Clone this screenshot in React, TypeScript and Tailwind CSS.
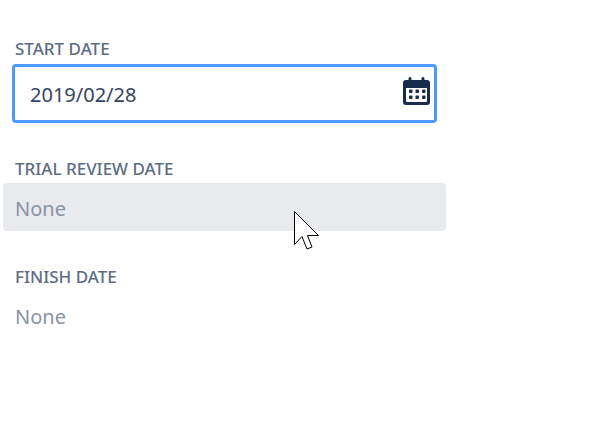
export default function App() {
  const font = { fontFamily: '"Noto Sans", "Open Sans", sans-serif' };
  return (
    <div className="relative w-[591px] h-[429px] bg-white overflow-hidden" style={font}>
      <div className="flex flex-col w-[443px] ml-[3px] pt-[38px]">
        <div className="h-[22px] pl-[12px] flex items-center text-[17px] leading-[22px] font-medium text-[#5e6c84]">START DATE</div>
        <div className="mt-[4px] ml-[9px] w-[425px] h-[59px] border-[3px] border-[#4c9aff] rounded-[4px] bg-white flex items-center justify-between pl-[15px] pr-[3px]">
          <span className="pt-[2px] text-[20px] text-[#344563]">2019/02/28</span>
          <svg className="mb-[5px]" width="28" height="28" viewBox="0 0 28 28" aria-hidden="true">
            <path fill="#172b4d" fillRule="evenodd" d="M7 0a1.500 1.500 0 0 1 1.500 1.500V3h10V1.500a1.500 1.500 0 0 1 3 0V3H24a3 3 0 0 1 3 3v19a3 3 0 0 1-3 3H3a3 3 0 0 1-3-3V6a3 3 0 0 1 3-3h2.500V1.500A1.500 1.500 0 0 1 7 0ZM3 11V24a1 1 0 0 0 1 1h19a1 1 0 0 0 1-1V11Z" />
            <g fill="#172b4d">
              <rect x="6" y="12.500" width="3.500" height="3.500" rx="1" />
              <rect x="12.500" y="12.500" width="3.500" height="3.500" rx="1" />
              <rect x="19" y="12.500" width="3.500" height="3.500" rx="1" />
              <rect x="6" y="18.500" width="3.500" height="3.500" rx="1" />
              <rect x="12.500" y="18.500" width="3.500" height="3.500" rx="1" />
              <rect x="19" y="18.500" width="3.500" height="3.500" rx="1" />
            </g>
          </svg>
        </div>
        <div className="mt-[35px] h-[22px] pl-[12px] flex items-center text-[17px] leading-[22px] font-medium text-[#5e6c84]">TRIAL REVIEW DATE</div>
        <div className="mt-[3px] h-[48px] rounded-[4px] bg-[#e9eaee] flex items-center pl-[12px] pt-[3px] text-[20px] text-[#8993a4]">None</div>
        <div className="mt-[35px] h-[22px] pl-[12px] flex items-center text-[17px] leading-[22px] font-medium text-[#5e6c84]">FINISH DATE</div>
        <div className="mt-[3px] h-[48px] flex items-center pl-[12px] pt-[3px] text-[20px] text-[#8993a4]">None</div>
      </div>
      <svg className="absolute left-[294px] top-[211px]" width="26" height="40" viewBox="0 0 26 40" aria-hidden="true">
        <path d="M0.500 0.500V33.500L8 25.500L13 38L18 36L13.500 24.500H24.500Z" fill="#fff" stroke="#000" strokeWidth="1" strokeLinejoin="round" />
      </svg>
    </div>
  );
}
